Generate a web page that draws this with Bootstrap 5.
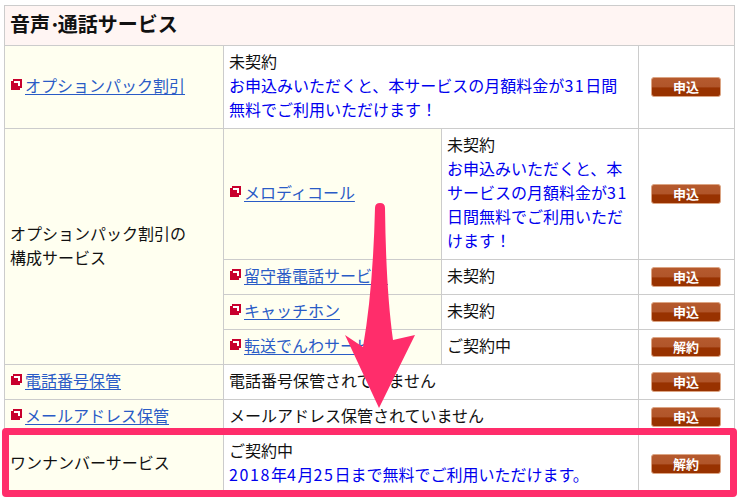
<!DOCTYPE html>
<html lang="ja">
<head>
<meta charset="utf-8">
<title>音声・通話サービス</title>
<link href="https://cdn.jsdelivr.net/npm/bootstrap@5.3.0/dist/css/bootstrap.min.css" rel="stylesheet">
<style>
html,body{height:498px;overflow:hidden;background:#fff}
.shot{position:relative;width:740px;height:498px;padding:5px 6px 0 4px;font-family:"Noto Sans CJK JP","Liberation Sans",sans-serif;font-size:16px;line-height:24px;color:#111}
.svc-table{width:730px;table-layout:fixed;border-collapse:collapse;margin:0;--bs-table-border-color:#ccc;--bs-table-bg:#fff;--bs-table-color:#111}
.svc-table>tbody>tr>*{padding:3px 5px 7px 5px;border:1px solid #ccc;vertical-align:middle;font-weight:400;box-shadow:none;line-height:24px}
.svc-table>tbody>tr>th.head-cell{--bs-table-bg:#fff5f3;font-size:20px;font-weight:700;line-height:29px;color:#111}
.svc-table>tbody>tr>.label-cell{--bs-table-bg:#fffff0}
.svc-table>tbody>tr>.act-cell{padding:0}
.note{color:#0000ee}
.num{letter-spacing:1.6px}
.mid-dot{letter-spacing:-3px;margin-left:-1px}
.svc-link{color:#2a5bc6;text-decoration:underline;text-underline-offset:2px}
.pop-icon{width:11px;height:11px;margin:0 3px 0 1px;vertical-align:2px;shape-rendering:crispEdges}
.svc-btn{display:flex;align-items:center;justify-content:center;width:70px;height:20px;margin-left:12px;padding:0 0 1px;border:1px solid #dca584;border-radius:3px;color:#fff;font-size:13px;font-weight:700;line-height:18px;background:linear-gradient(#b65a2d 0,#b0552a 48%,#983200 56%,#983200 100%)}
.svc-btn:hover{color:#fff;background:linear-gradient(#b65a2d 0,#b0552a 48%,#983200 56%,#983200 100%);border-color:#dca584}
.hilite{position:absolute;left:2px;top:428px;width:735px;height:69px;border:7px solid #ff2d6b;border-radius:4px;pointer-events:none}
.arrow{position:absolute;left:340px;top:198px;width:80px;height:215px;pointer-events:none}
</style>
</head>
<body>
<div class="shot">
<svg class="d-none"><defs><symbol id="pop" viewBox="0 0 11 11"><path fill="#c8002d" d="M0 2h2V0h9v9H9v2H0z"/><path fill="#fff" d="M3 2h6v5H7V4H3z"/></symbol></defs></svg>
<table class="table svc-table">
<colgroup><col style="width:219px"><col style="width:218px"><col style="width:197px"><col style="width:96px"></colgroup>
<tbody>
<tr><th colspan="4" class="head-cell">音声<span class="mid-dot">·</span>通話サービス</th></tr>
<tr>
<td class="label-cell"><svg class="pop-icon"><use href="#pop"/></svg><a class="svc-link" href="#">オプションパック割引</a></td>
<td colspan="2">未契約<br><span class="note">お申込みいただくと、本サービスの月額料金が<span class="num">31</span>日間<br>無料でご利用いただけます！</span></td>
<td class="act-cell"><a class="btn svc-btn" href="#">申込</a></td>
</tr>
<tr>
<td rowspan="4" class="label-cell">オプションパック割引の<br>構成サービス</td>
<td class="label-cell"><svg class="pop-icon"><use href="#pop"/></svg><a class="svc-link" href="#">メロディコール</a></td>
<td>未契約<br><span class="note">お申込みいただくと、本<br>サービスの月額料金が<span class="num">31</span><br>日間無料でご利用いただ<br>けます！</span></td>
<td class="act-cell"><a class="btn svc-btn" href="#">申込</a></td>
</tr>
<tr>
<td class="label-cell text-nowrap overflow-hidden"><svg class="pop-icon"><use href="#pop"/></svg><a class="svc-link" href="#">留守番電話サービス</a></td>
<td>未契約</td>
<td class="act-cell"><a class="btn svc-btn" href="#">申込</a></td>
</tr>
<tr>
<td class="label-cell"><svg class="pop-icon"><use href="#pop"/></svg><a class="svc-link" href="#">キャッチホン</a></td>
<td>未契約</td>
<td class="act-cell"><a class="btn svc-btn" href="#">申込</a></td>
</tr>
<tr>
<td class="label-cell text-nowrap overflow-hidden"><svg class="pop-icon"><use href="#pop"/></svg><a class="svc-link" href="#">転送でんわサービス</a></td>
<td>ご契約中</td>
<td class="act-cell"><a class="btn svc-btn" href="#">解約</a></td>
</tr>
<tr>
<td class="label-cell"><svg class="pop-icon"><use href="#pop"/></svg><a class="svc-link" href="#">電話番号保管</a></td>
<td colspan="2">電話番号保管されていません</td>
<td class="act-cell"><a class="btn svc-btn" href="#">申込</a></td>
</tr>
<tr>
<td class="label-cell"><svg class="pop-icon"><use href="#pop"/></svg><a class="svc-link" href="#">メールアドレス保管</a></td>
<td colspan="2">メールアドレス保管されていません</td>
<td class="act-cell"><a class="btn svc-btn" href="#">申込</a></td>
</tr>
<tr>
<td class="label-cell">ワンナンバーサービス</td>
<td colspan="2">ご契約中<br><span class="note"><span class="num">2018</span>年<span class="num">4</span>月<span class="num">25</span>日まで無料でご利用いただけます。</span></td>
<td class="act-cell"><a class="btn svc-btn" href="#">解約</a></td>
</tr>
</tbody>
</table>
<div class="hilite"></div>
<svg class="arrow" viewBox="340 198 80 215"><path fill="#ff2d6b" d="M375 208Q375 203 380 203Q385 203 385 208Q386 290 393 340L415 335L379 408L345 335L363 347Q373 290 375 208Z"/></svg>
</div>
<script src="https://cdn.jsdelivr.net/npm/bootstrap@5.3.0/dist/js/bootstrap.bundle.min.js"></script>
</body>
</html>
